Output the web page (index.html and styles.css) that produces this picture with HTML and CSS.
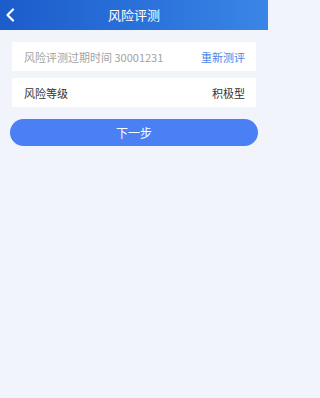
FILE: index.html
```html
<!DOCTYPE html>
<html lang="zh">
<head>
<meta charset="utf-8">
<title>风险评测</title>
<link rel="stylesheet" href="styles.css">
</head>
<body>
<header class="nav">
  <span class="back">
    <svg width="10" height="14" viewBox="0 0 10 14"><path d="M8 1.5 L2.5 7 L8 12.5" fill="none" stroke="#fff" stroke-width="2.2" stroke-linecap="round" stroke-linejoin="round"/></svg>
  </span>
  <h1 class="title">风险评测</h1>
</header>
<main class="content">
  <div class="card">
    <span class="muted">风险评测过期时间 30001231</span>
    <span class="link">重新测评</span>
  </div>
  <div class="card">
    <span class="label">风险等级</span>
    <span class="value">积极型</span>
  </div>
  <button class="btn">下一步</button>
</main>
</body>
</html>
```
FILE: styles.css
```css
* { box-sizing: border-box; }
html, body { margin: 0; padding: 0; }
body {
  width: 268px;
  height: 398px;
  background: #f1f4fb;
  font-family: "Noto Sans CJK SC", "Noto Sans", sans-serif;
}
.nav {
  height: 30px;
  background: linear-gradient(90deg, #1c5ccb 0%, #2c74dc 60%, #3a86e6 100%);
  display: flex;
  align-items: center;
  justify-content: center;
  position: relative;
}
.back {
  position: absolute;
  left: 5px;
  top: 8px;
  display: flex;
}
.title {
  margin: 0;
  font-size: 13px;
  font-weight: normal;
  color: #fff;
  line-height: 30px;
}
.content {
  padding: 12px 12px 0 12px;
  display: flex;
  flex-direction: column;
  gap: 7px;
}
.card {
  height: 29px;
  background: #fff;
  display: flex;
  align-items: center;
  justify-content: space-between;
  padding: 0 11px 0 12px;
  font-size: 11px;
}
.muted { color: #a3a3a3; }
.link { color: #4a86e8; }
.label { color: #333; }
.value { color: #333; }
.btn {
  margin: 5px -2px 0 -2px;
  height: 27px;
  border: none;
  border-radius: 14px;
  background: #4b7ff4;
  color: #fff;
  font-family: inherit;
  font-size: 12px;
  padding: 0;
}
```
